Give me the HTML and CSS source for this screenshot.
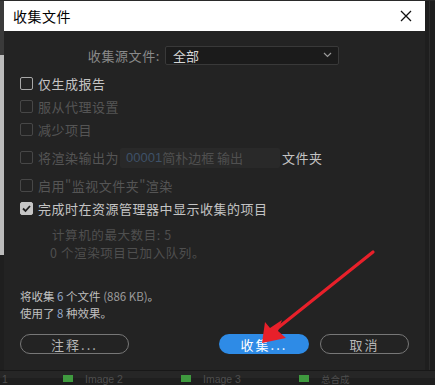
FILE: index.html
```html
<!DOCTYPE html>
<html lang="zh">
<head>
<meta charset="utf-8">
<link rel="stylesheet" href="styles.css">
</head>
<body>
<div class="page">
  <div class="dialog">
    <div class="titlebar">
      <span class="title">收集文件</span>
      <svg class="close" width="12" height="12" viewBox="0 0 12 12"><path d="M1 1L11 11M11 1L1 11" stroke="#111" stroke-width="1.3" fill="none"/></svg>
    </div>
    <div class="body">
      <div class="source-row">
        <span class="source-label">收集源文件:</span>
        <div class="select"><span>全部</span>
          <svg width="9" height="6" viewBox="0 0 9 6"><path d="M1 1L4.5 4.5L8 1" stroke="#9a9a9a" stroke-width="1.2" fill="none"/></svg>
        </div>
      </div>
      <div class="checks">
        <div class="row enabled"><span class="box"></span><span>仅生成报告</span></div>
        <div class="row disabled"><span class="box"></span><span>服从代理设置</span></div>
        <div class="row disabled"><span class="box"></span><span>减少项目</span></div>
        <div class="row disabled tall"><span class="box"></span><span>将渲染输出为</span><span class="field"><span class="num">00001</span>简朴边框 输出</span><span class="folder">文件夹</span></div>
        <div class="row disabled"><span class="box"></span><span>启用"监视文件夹"渲染</span></div>
        <div class="row enabled"><span class="box checked"><svg width="11" height="11" viewBox="0 0 11 11"><path d="M2 5.5L4.5 8L9 3" stroke="#202020" stroke-width="1.8" fill="none"/></svg></span><span>完成时在资源管理器中显示收集的项目</span></div>
      </div>
      <div class="info">
        <div class="info-a">计算机的最大数目: 5</div>
        <div>0 个渲染项目已加入队列。</div>
      </div>
      <div class="summary">
        <div>将收集 <span class="n">6</span> 个文件 <span class="kb">(886 KB)</span>。</div>
        <div>使用了 <span class="n">8</span> 种效果。</div>
      </div>
      <div class="buttons">
        <button class="btn note">注释...</button>
        <div class="right-btns">
          <button class="btn primary">收集...</button>
          <button class="btn cancel">取消</button>
        </div>
      </div>
    </div>
  </div>
  <div class="behind">
    <span class="one">1</span>
    <span class="item"><span class="sq"></span>Image 2</span>
    <span class="item"><span class="sq"></span>Image 3</span>
    <span class="item"><span class="sq"></span>总合成</span>
  </div>
  <svg class="arrow" width="435" height="385" viewBox="0 0 435 385">
    <line x1="373" y1="252" x2="274" y2="331" stroke="#e8202a" stroke-width="3.2" stroke-linecap="round"/>
    <polygon points="262,343 265,322 270,328 282,320 278,331 286,338" fill="#e8202a"/>
  </svg>
</div>
</body>
</html>
```

FILE: styles.css
```css
html, body {
  margin: 0;
  padding: 0;
}
body {
  width: 435px;
  height: 385px;
  overflow: hidden;
  background: #1e1e1e;
  font-family: "Noto Sans CJK SC", "Noto Sans", "Liberation Sans", sans-serif;
}
.page {
  position: relative;
  width: 435px;
  height: 385px;
  background:
    linear-gradient(to bottom, #2a2a2a 0, #2a2a2a 1px, transparent 1px),
    linear-gradient(to right, transparent 0, transparent 429px, #2c2c2c 429px, #2c2c2c 430px, transparent 430px),
    linear-gradient(to bottom, #3a3a3a 0, #3a3a3a 55px, #bcbcbc 55px, #bcbcbc 255px, #1f1f1f 255px) 0 0 / 4px 369px no-repeat,
    #1e1e1e;
}
.dialog {
  margin-left: 4px;
  padding-top: 1px;
  width: 421px;
  display: flex;
  flex-direction: column;
}
.titlebar {
  height: 30px;
  background: #ffffff;
  display: flex;
  align-items: center;
  justify-content: space-between;
  padding: 0 13px 0 9px;
}
.title {
  font-size: 14px;
  color: #000;
  letter-spacing: 0.5px;
}
.close {
  display: block;
}
.body {
  background: #232323;
  padding: 14px 16px 16px 16px;
  display: flex;
  flex-direction: column;
}
.source-row {
  display: flex;
  align-items: center;
  height: 20px;
}
.source-label {
  width: 145px;
  text-align: right;
  font-size: 13px;
  color: #8a8a8a;
  letter-spacing: 0.6px;
  padding-right: 5px;
  box-sizing: border-box;
}
.select {
  width: 174px;
  height: 19px;
  box-sizing: border-box;
  background: #1b1b1b;
  border: 1px solid #393939;
  border-radius: 2px;
  display: flex;
  align-items: center;
  justify-content: space-between;
  padding: 0 6px 0 7px;
  font-size: 13px;
  color: #d6d6d6;
}
.select svg {
  display: block;
}
.checks {
  margin-top: 7px;
  display: flex;
  flex-direction: column;
}
.row {
  height: 23px;
  display: flex;
  align-items: center;
  font-size: 13px;
  letter-spacing: 0.5px;
}
.row.tall {
  height: 33px;
}
.box {
  width: 13px;
  height: 13px;
  box-sizing: border-box;
  border-radius: 2px;
  margin-right: 5px;
  flex: none;
  display: flex;
  align-items: center;
  justify-content: center;
}
.enabled {
  color: #c4c4c4;
}
.enabled .box {
  border: 1.5px solid #a8a8a8;
}
.disabled {
  color: #555555;
}
.disabled .box {
  border: 1.5px solid #474747;
}
.box.checked {
  background: #c6c6c6;
  border-color: #c6c6c6;
}
.box svg {
  display: block;
}
.field {
  width: 160px;
  height: 20px;
  box-sizing: border-box;
  background: #292929;
  border-radius: 2px;
  margin-left: 1px;
  padding-left: 6px;
  display: flex;
  align-items: center;
  color: #505050;
  letter-spacing: 0;
}
.num {
  color: #3e5168;
  font-family: "Liberation Sans", sans-serif;
}
.folder {
  margin-left: 2px;
  color: #c4c4c4;
}
.info {
  margin-top: 6px;
  padding-left: 30px;
  font-size: 12.5px;
  line-height: 18px;
  color: #4f4f4f;
  letter-spacing: 0.6px;
}
.info-a {
  padding-left: 2px;
}
.summary {
  margin-top: 26px;
  font-size: 11.5px;
  line-height: 16.5px;
  color: #c0c0c0;
}
.summary .n {
  color: #8fa4c6;
}
.summary .kb {
  color: #9a9a9a;
}
.buttons {
  margin-top: 13px;
  display: flex;
  justify-content: space-between;
  align-items: center;
}
.right-btns {
  display: flex;
  gap: 11px;
}
.btn {
  height: 20px;
  box-sizing: border-box;
  border-radius: 10px;
  font-family: "Noto Sans CJK SC", "Noto Sans", sans-serif;
  font-size: 13px;
  letter-spacing: 2px;
  padding: 0;
  display: flex;
  align-items: center;
  justify-content: center;
  line-height: 1;
}
.note {
  width: 109px;
  background: transparent;
  border: 1.5px solid #777;
  color: #b8b8b8;
}
.primary {
  width: 90px;
  background: #2e8be6;
  border: none;
  color: #ffffff;
}
.cancel {
  width: 89px;
  background: transparent;
  border: 1.5px solid #777;
  color: #b8b8b8;
}
.behind {
  height: 15px;
  display: flex;
  align-items: center;
  font-family: "Liberation Sans", sans-serif;
  font-size: 10.5px;
  color: #4e4e4e;
  border-top: 1px solid #181818;
  background: linear-gradient(to bottom, #262626 0, #262626 7px, #1f1f1f 7px);
}
.one {
  width: 63px;
  padding-left: 2px;
  box-sizing: border-box;
  line-height: 12px;
}
.item {
  width: 118px;
  display: flex;
  align-items: center;
  line-height: 12px;
}
.item:last-child {
  font-family: "Noto Sans CJK SC", sans-serif;
  font-size: 9.5px;
}
.sq {
  width: 10px;
  height: 7px;
  background: #3f9a3f;
  margin-right: 12px;
}
.arrow {
  position: absolute;
  left: 0;
  top: 0;
  pointer-events: none;
}
```
